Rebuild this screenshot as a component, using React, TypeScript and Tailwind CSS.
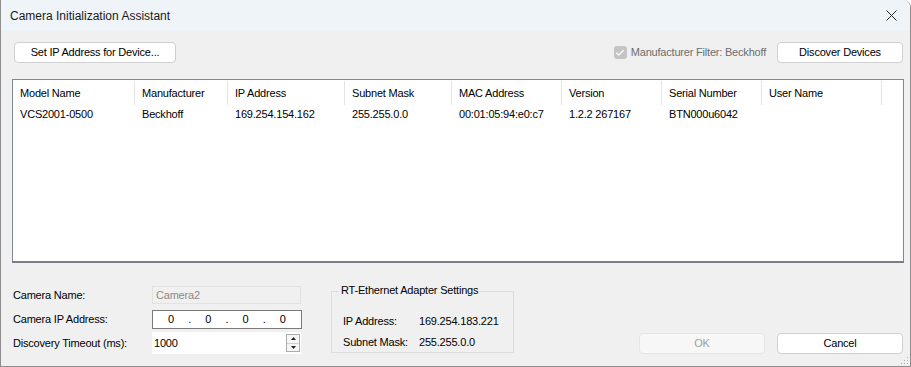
import { Check } from "lucide-react";

const cols = [
  { name: "Model Name", w: 122, v: "VCS2001-0500" },
  { name: "Manufacturer", w: 93, v: "Beckhoff" },
  { name: "IP Address", w: 117, v: "169.254.154.162" },
  { name: "Subnet Mask", w: 107, v: "255.255.0.0" },
  { name: "MAC Address", w: 110, v: "00:01:05:94:e0:c7" },
  { name: "Version", w: 100, v: "1.2.2 267167" },
  { name: "Serial Number", w: 100, v: "BTN000u6042" },
  { name: "User Name", w: 120, v: "" },
];

function Btn({ label, className = "", disabled = false }: { label: string; className?: string; disabled?: boolean }) {
  return (
    <button
      className={`h-[21px] rounded-[4px] border text-[11px] leading-none ${
        disabled ? "border-[#e5e5e5] bg-[#f7f7f7] text-[#a0a0a0]" : "border-[#cfcfcf] bg-white text-black"
      } ${className}`}
    >
      {label}
    </button>
  );
}

export default function App() {
  return (
    <div
      className="w-[911px] h-[367px] bg-[#f0f0f0] border-l border-r border-b border-[#8e8e8e] rounded-tr-[8px] flex flex-col text-black overflow-hidden tracking-[-0.2px]"
      style={{ fontFamily: '"Liberation Sans", Arial, sans-serif' }}
    >
      {/* Title bar */}
      <div className="h-[31px] shrink-0 bg-[#eff4f9] flex items-center justify-between pl-[9px] pr-[13px]">
        <span className="text-[12px] text-[#1a1a1a] tracking-normal">Camera Initialization Assistant</span>
        <svg width="11" height="11" viewBox="0 0 11 11" className="text-[#222]">
          <path d="M0.5 0.5 L10.5 10.5 M10.5 0.5 L0.5 10.5" stroke="currentColor" strokeWidth="1" fill="none" />
        </svg>
      </div>

      {/* Body */}
      <div className="flex-1 flex flex-col pl-[11px] pr-[6px] relative">
        {/* Toolbar */}
        <div className="mt-[11px] flex items-center justify-between">
          <Btn label="Set IP Address for Device..." className="ml-[2px] w-[162px]" />
          <div className="flex items-center">
            <div className="w-[13px] h-[13px] rounded-[3px] bg-[#c4c4c4] flex items-center justify-center">
              <Check className="w-[10px] h-[10px] text-white" strokeWidth={3} />
            </div>
            <span className="ml-[4px] text-[11px] text-[#6d6d6d]">Manufacturer Filter: Beckhoff</span>
            <Btn label="Discover Devices" className="ml-[11px] w-[126px] mr-[1px]" />
          </div>
        </div>

        {/* Device list */}
        <div className="mt-[16px] h-[184px] w-[892px] bg-white border border-[#828790] border-b-2 border-b-[#7a7d88]">
          <div className="flex h-[24px] mt-[1px] text-[11px]">
            {cols.map((c) => (
              <div key={c.name} style={{ width: c.w }} className="flex items-center pl-[7px] border-r border-[#e3e3e3] shrink-0">
                {c.name}
              </div>
            ))}
          </div>
          <div className="flex h-[18px] text-[11px]">
            {cols.map((c) => (
              <div key={c.name} style={{ width: c.w }} className="flex items-center pl-[7px] shrink-0">
                {c.v}
              </div>
            ))}
          </div>
        </div>

        {/* Bottom section */}
        <div className="mt-[23px] flex items-start text-[11px]">
          <div className="flex flex-col w-[300px]">
            <div className="flex items-center h-[18px]">
              <span className="w-[139px] ml-[1px]">Camera Name:</span>
              <div className="w-[149px] h-[18px] border border-[#e2e2e2] bg-[#f0f0f0] text-[#8a8a8a] flex items-center pl-[3px]">
                Camera2
              </div>
            </div>
            <div className="flex items-center h-[19px] mt-[6px]">
              <span className="w-[139px] ml-[1px]">Camera IP Address:</span>
              <div className="w-[150px] h-[19px] border border-[#7a7a7a] bg-white flex items-center justify-around px-[8px]">
                <span>0</span><span>.</span><span>0</span><span>.</span><span>0</span><span>.</span><span>0</span>
              </div>
            </div>
            <div className="flex items-center h-[22px] mt-[3px]">
              <span className="w-[139px] ml-[1px]">Discovery Timeout (ms):</span>
              <div className="w-[149px] h-[22px] bg-white flex items-center pl-[2px] justify-between">
                <span>1000</span>
                <div className="w-[14px] h-[18px] mr-[1px] border border-[#acacac] bg-[#f5f5f5] flex flex-col">
                  <div className="flex-1 flex items-center justify-center border-b border-[#d0d0d0]">
                    <svg width="5" height="3" viewBox="0 0 5 3"><path d="M2.5 0 L5 3 L0 3 Z" fill="#222" /></svg>
                  </div>
                  <div className="flex-1 flex items-center justify-center">
                    <svg width="5" height="3" viewBox="0 0 5 3"><path d="M0 0 L5 0 L2.5 3 Z" fill="#222" /></svg>
                  </div>
                </div>
              </div>
            </div>
          </div>

          <div className="ml-[19px] mt-[5px] w-[183px] h-[62px] border border-[#dcdcdc] pl-[11px] relative">
            <span className="absolute left-[7px] top-[-7px] px-[2px] bg-[#f0f0f0] leading-none">RT-Ethernet Adapter Settings</span>
            <div className="flex mt-[22px] leading-[14px]">
              <span className="w-[76px]">IP Address:</span>
              <span>169.254.183.221</span>
            </div>
            <div className="flex mt-[7px] leading-[14px]">
              <span className="w-[76px]">Subnet Mask:</span>
              <span>255.255.0.0</span>
            </div>
          </div>

          <div className="flex-1 self-stretch flex items-end justify-end">
            <div className="flex mr-[1px]">
              <Btn label="OK" disabled className="w-[126px]" />
              <Btn label="Cancel" className="ml-[12px] w-[126px]" />
            </div>
          </div>
        </div>

        {/* resize grip */}
        <svg width="8" height="8" viewBox="0 0 8 8" className="absolute right-[1px] bottom-[1px]">
          <rect x="6" y="0" width="1" height="1" fill="#b0b0b0" />
          <rect x="3" y="3" width="1" height="1" fill="#b0b0b0" />
          <rect x="6" y="3" width="1" height="1" fill="#b0b0b0" />
          <rect x="0" y="6" width="1" height="1" fill="#b0b0b0" />
          <rect x="3" y="6" width="1" height="1" fill="#b0b0b0" />
          <rect x="6" y="6" width="1" height="1" fill="#b0b0b0" />
        </svg>
      </div>
    </div>
  );
}
